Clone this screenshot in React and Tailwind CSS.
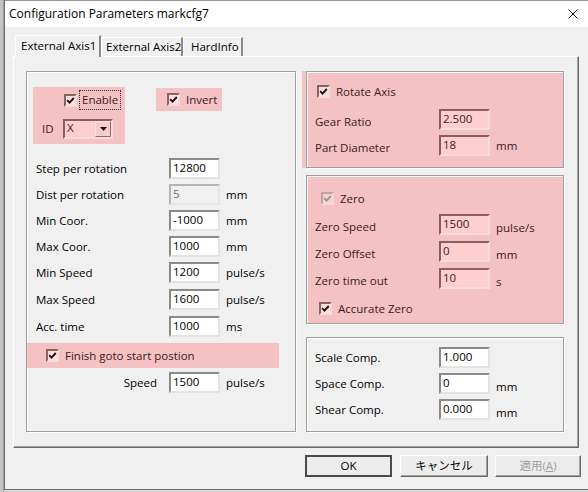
import React from 'react';

const PINK_TEXT = 'text-[#3d1a22]';

function CheckBox({ disabled = false }) {
  return (
    <span
      className={`flex-none w-[13px] h-[13px] flex items-center justify-center border-2 ${
        disabled
          ? 'border-t-[#bca4a4] border-l-[#bca4a4] border-r-[#f3d8d8] border-b-[#f3d8d8] bg-[#f6d2d2]'
          : 'border-t-[#866464] border-l-[#866464] border-r-[#f4dcdc] border-b-[#f4dcdc] bg-[#fbe0e0]'
      }`}
    >
      <svg width="9" height="9" viewBox="0 0 9 9">
        <path
          d="M1.2 4.2 L3.5 6.6 L7.8 2"
          fill="none"
          stroke={disabled ? '#ab8f8f' : '#2a0b10'}
          strokeWidth="1.9"
        />
      </svg>
    </span>
  );
}

// checkbox with its caption, kept to the box height so spacing follows the box
function CheckRow({ label, disabled, className = '' }) {
  return (
    <div className={`flex items-center h-[13px] ${className}`}>
      <CheckBox disabled={disabled} />
      <span className="ml-[6px] whitespace-nowrap">{label}</span>
    </div>
  );
}

function Field({ value, pink, disabled }) {
  const tone = pink
    ? 'bg-[#ffcfcf] border-t-[#8e5c5c] border-l-[#8e5c5c] border-r-[#f7dcdc] border-b-[#f7dcdc] text-[#3d1a22]'
    : disabled
    ? 'bg-[#f0f0f0] border-t-[#b4b4b4] border-l-[#b4b4b4] border-r-[#e6e6e6] border-b-[#e6e6e6] text-[#707070]'
    : 'bg-white border-t-[#8a8a8a] border-l-[#8a8a8a] border-r-[#e3e3e3] border-b-[#e3e3e3] text-black';
  return (
    <div className={`flex-none w-[51px] h-[21px] border-2 pl-[2px] pb-[2px] flex items-center leading-none ${tone}`}>
      {value}
    </div>
  );
}

function Row({ label, value, unit, labelW, pink, disabled, unitLow, className = '' }) {
  return (
    <div className={`flex items-center h-[21px] ${pink ? PINK_TEXT : ''} ${className}`}>
      <span className={`flex-none whitespace-nowrap ${labelW} ${pink ? 'translate-y-[2px]' : ''}`}>{label}</span>
      <Field value={value} pink={pink} disabled={disabled} />
      {unit && <span className={`ml-[6px] ${unitLow ? 'translate-y-[3px]' : ''}`}>{unit}</span>}
    </div>
  );
}

function Group({ className = '', children }) {
  return (
    <div className={`border border-[#a0a0a0] shadow-[1px_1px_0_#ffffff,inset_1px_1px_0_#ffffff] flex flex-col ${className}`}>
      {children}
    </div>
  );
}

function Button({ children, isDefault, disabled }) {
  return (
    <div
      className={`h-[22px] flex items-center justify-center bg-[#ececec] ${
        isDefault
          ? 'border-2 border-[#4a4a4a]'
          : 'border border-t-[#ffffff] border-l-[#ffffff] border-r-[#696969] border-b-[#696969] shadow-[inset_-1px_-1px_0_#a0a0a0]'
      } ${disabled ? 'text-[#a0a0a0]' : 'text-black'}`}
    >
      {children}
    </div>
  );
}

export default function App() {
  return (
    <div className="w-[588px] h-[492px] flex items-start bg-[#d6d6d6] overflow-hidden font-['Open_Sans','Noto_Sans_CJK_JP',sans-serif] text-[11.5px] leading-[16px] text-black">
      {/* desktop sliver to the left */}
      <div className="flex-none w-[4px] h-full bg-[#c4c4c4] border-r border-[#9a9a9a]" />

      {/* dialog window */}
      <div className="flex-1 h-[490px] flex flex-col border-l border-[#707070] border-b border-[#5a5a5a]">
        {/* title bar */}
        <div className="flex-none h-[27px] bg-white border-t border-[#9a9a9a] flex items-center pl-[4px] pr-[10px]">
          <span className="text-[12px]">Configuration Parameters markcfg7</span>
          <svg className="ml-auto" width="10" height="10" viewBox="0 0 10 10">
            <path d="M0.5 0.5 L9.5 9.5 M9.5 0.5 L0.5 9.5" stroke="#1a1a1a" strokeWidth="1" />
          </svg>
        </div>

        {/* body */}
        <div className="flex-1 bg-[#f0f0f0] pl-[8px] pt-[8px] flex flex-col">
          {/* tabs */}
          <div className="flex items-start h-[21px] pl-[2px] whitespace-nowrap">
            <div className="relative z-10 w-[86px] h-[22px] bg-[#f0f0f0] border-t border-l border-[#ffffff] border-r-2 border-r-[#8a8a8a] pl-[5px] pt-[2px]">
              External Axis1
            </div>
            <div className="mt-[2px] w-[82px] h-[19px] border-t border-l border-[#ffffff] border-r-2 border-r-[#8a8a8a] pl-[4px] pt-[1px]">
              External Axis2
            </div>
            <div className="mt-[2px] w-[60px] h-[19px] border-t border-l border-[#ffffff] border-r-2 border-r-[#8a8a8a] pl-[7px] pt-[1px]">
              HardInfo
            </div>
          </div>

          {/* tab panel */}
          <div className="w-[566px] h-[392px] border border-t-[#ffffff] border-l-[#ffffff] border-r-[#696969] border-b-[#696969] shadow-[inset_-1px_-1px_0_#a0a0a0] pl-[12px] pt-[14px] flex gap-[6px]">
            {/* left group */}
            <Group className="flex-none w-[270px] h-[361px]">
              <div className="flex items-start mt-[15px] ml-[6px]">
                <div className={`w-[92px] h-[57px] bg-[#f4c2c2] flex flex-col ${PINK_TEXT}`}>
                  <div className="flex items-center mt-[4px] ml-[31px] h-[18px]">
                    <CheckBox />
                    <span className="ml-[3px] px-[2px] h-[18px] flex items-center outline outline-1 outline-dotted outline-[#333]">
                      Enable
                    </span>
                  </div>
                  <div className="flex items-center mt-[10px] ml-[9px]">
                    <span className="w-[21px]">ID</span>
                    <div className="w-[50px] h-[20px] border-2 border-t-[#8e5c5c] border-l-[#8e5c5c] border-r-[#f7dcdc] border-b-[#f7dcdc] bg-[#ffcfcf] flex items-center">
                      <span className="flex-1 pl-[2px] pb-[2px]">X</span>
                      <div className="w-[16px] h-full border border-t-[#fde6e6] border-l-[#fde6e6] border-r-[#8e6a6a] border-b-[#8e6a6a] bg-[#f7cccc] flex items-center justify-center">
                        <svg width="7" height="4" viewBox="0 0 7 4">
                          <path d="M0 0 H7 L3.5 4 Z" fill="#1a0a0a" />
                        </svg>
                      </div>
                    </div>
                  </div>
                </div>
                <div className={`ml-[31px] mt-[1px] w-[66px] h-[23px] bg-[#f4c2c2] flex items-center pl-[11px] ${PINK_TEXT}`}>
                  <CheckRow label="Invert" />
                </div>
              </div>

              <div className="flex flex-col pl-[9px]">
                <Row className="mt-[14px]" labelW="w-[133px]" label="Step per rotation" value="12800" />
                <Row className="mt-[5px]" labelW="w-[133px]" label="Dist per rotation" value="5" unit="mm" disabled />
                <Row className="mt-[5px]" labelW="w-[133px]" label="Min Coor." value="-1000" unit="mm" />
                <Row className="mt-[5px]" labelW="w-[133px]" label="Max Coor." value="1000" unit="mm" />
                <Row className="mt-[5px]" labelW="w-[133px]" label="Min Speed" value="1200" unit="pulse/s" />
                <Row className="mt-[6px]" labelW="w-[133px]" label="Max Speed" value="1600" unit="pulse/s" />
                <Row className="mt-[6px]" labelW="w-[133px]" label="Acc. time" value="1000" unit="ms" />
              </div>

              <div className={`mt-[6px] w-[252px] h-[25px] bg-[#f4c2c2] flex items-center pl-[19px] ${PINK_TEXT}`}>
                <CheckRow label="Finish goto start postion" />
              </div>

              <div className="flex items-center h-[21px] mt-[4px] pl-[9px]">
                <span className="flex-none w-[133px] text-right pr-[12px]">Speed</span>
                <Field value="1500" />
                <span className="ml-[6px]">pulse/s</span>
              </div>
            </Group>

            {/* right column */}
            <div className="flex-none w-[262px] flex flex-col">
              <div className="h-[97px] bg-[#f4c2c2] pl-[4px] flex">
                <Group className={`flex-1 ${PINK_TEXT}`}>
                  <CheckRow className="mt-[13px] ml-[10px]" label="Rotate Axis" />
                  <div className="flex flex-col pl-[8px]">
                    <Row pink className="mt-[11px]" labelW="w-[124px]" label="Gear Ratio" value="2.500" />
                    <Row pink className="mt-[5px]" labelW="w-[124px]" label="Part Diameter" value="18" unit="mm" />
                  </div>
                </Group>
              </div>

              <Group className={`ml-[4px] mt-[7px] h-[149px] bg-[#f4c2c2] ${PINK_TEXT}`}>
                <CheckRow disabled className="mt-[16px] ml-[14px]" label="Zero" />
                <div className="flex flex-col pl-[8px]">
                  <Row pink unitLow className="mt-[9px]" labelW="w-[124px]" label="Zero Speed" value="1500" unit="pulse/s" />
                  <Row pink unitLow className="mt-[6px]" labelW="w-[124px]" label="Zero Offset" value="0" unit="mm" />
                  <Row pink unitLow className="mt-[6px]" labelW="w-[124px]" label="Zero time out" value="10" unit="s" />
                </div>
                <CheckRow className="mt-[13px] ml-[12px]" label="Accurate Zero" />
              </Group>

              <Group className="ml-[4px] mt-[13px] h-[95px]">
                <div className="flex flex-col pl-[8px]">
                  <Row className="mt-[9px]" labelW="w-[124px]" label="Scale Comp." value="1.000" />
                  <Row unitLow className="mt-[5px]" labelW="w-[124px]" label="Space Comp." value="0" unit="mm" />
                  <Row unitLow className="mt-[5px]" labelW="w-[124px]" label="Shear Comp." value="0.000" unit="mm" />
                </div>
              </Group>
            </div>
          </div>

          {/* dialog buttons */}
          <div className="flex mt-[7px] ml-[292px]">
            <div className="w-[87px]">
              <Button isDefault>OK</Button>
            </div>
            <div className="w-[88px] ml-[8px]">
              <Button>キャンセル</Button>
            </div>
            <div className="w-[86px] ml-[7px]">
              <Button disabled>
                適用(<span className="underline">A</span>)
              </Button>
            </div>
          </div>
        </div>
      </div>
    </div>
  );
}
